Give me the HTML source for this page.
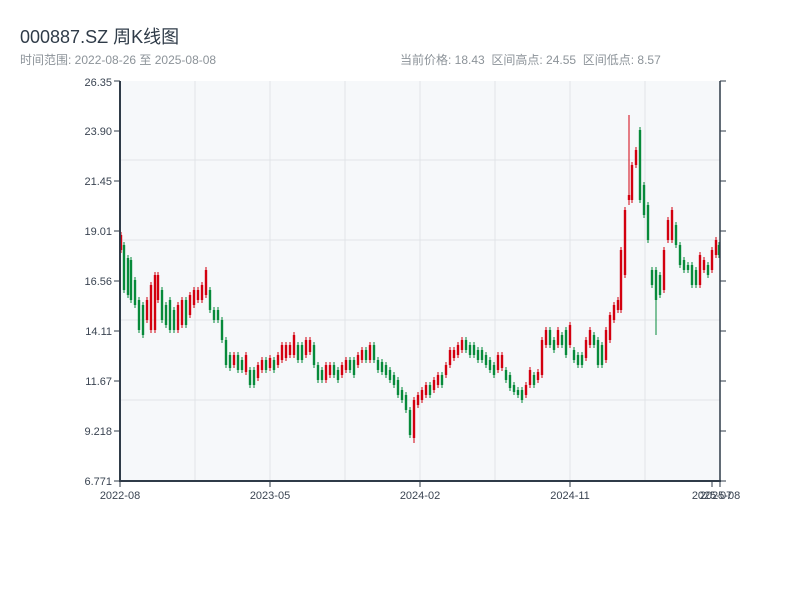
<!DOCTYPE html>
<html><head><meta charset="utf-8"><style>
body{margin:0;width:800px;height:600px;background:#fff;font-family:"Liberation Sans","Noto Sans CJK SC",sans-serif;overflow:hidden;position:relative}
.t{position:absolute;left:20px;top:23px;font-size:18px;color:#2f3b48}
.s{position:absolute;top:51px;font-size:12px;color:#8c9399}
svg{position:absolute;left:0;top:0}
svg text{font-family:"Liberation Sans",sans-serif;font-size:11px;fill:#3a4452}
</style></head><body>
<div class="t">000887.SZ 周K线图</div>
<div class="s" style="left:20px">时间范围: 2022-08-26 至 2025-08-08</div>
<div class="s" style="left:400px">当前价格: 18.43 &nbsp;区间高点: 24.55 &nbsp;区间低点: 8.57</div>
<svg id="c" width="800" height="600">
<rect x="120" y="81" width="600" height="400" fill="#f6f8fa"/>
<g stroke="#e1e4e8" stroke-width="1">
<line x1="120" y1="160" x2="720" y2="160"/><line x1="120" y1="240" x2="720" y2="240"/>
<line x1="120" y1="320" x2="720" y2="320"/><line x1="120" y1="400" x2="720" y2="400"/>
<line x1="195" y1="81" x2="195" y2="481"/><line x1="270" y1="81" x2="270" y2="481"/>
<line x1="345" y1="81" x2="345" y2="481"/><line x1="420" y1="81" x2="420" y2="481"/>
<line x1="495" y1="81" x2="495" y2="481"/><line x1="570" y1="81" x2="570" y2="481"/>
<line x1="645" y1="81" x2="645" y2="481"/>
</g>
<g id="k"></g>
<g stroke="#2f3b48" stroke-width="2">
<line x1="120" y1="81" x2="120" y2="482"/><line x1="119" y1="481" x2="721" y2="481"/>
<line x1="720" y1="81" x2="720" y2="482" stroke-width="1.5"/>
</g>
<g stroke="#2f3b48" stroke-width="1" id="ticks"></g>
<g text-anchor="end">
<text x="112" y="86">26.35</text><text x="112" y="135">23.90</text><text x="112" y="185">21.45</text>
<text x="112" y="235">19.01</text><text x="112" y="285">16.56</text><text x="112" y="335">14.11</text>
<text x="112" y="385">11.67</text><text x="112" y="435">9.218</text><text x="112" y="485">6.771</text>
</g>
<g text-anchor="middle">
<text x="120" y="499">2022-08</text><text x="270" y="499">2023-05</text><text x="420" y="499">2024-02</text>
<text x="570" y="499">2024-11</text><text x="712" y="499">2025-07</text><text x="720" y="499">2025-08</text>
</g>
</svg>
<script>
var d=[[121,235,250],[124,245,290],[128,258,295],[131,260,300],[135,280,305],[139,300,330],[143,305,335],[147,300,320],[151,285,330],[155,275,330],[158,275,300],[162,290,320],[166,305,325],[170,300,330],[174,310,330],[178,305,330],[182,300,325],[186,300,325],[190,295,315],[194,290,305],[198,290,300],[202,285,300],[206,270,295],[210,290,310],[214,310,320],[218,310,320],[222,320,340],[226,340,365],[230,355,368],[234,355,365],[238,355,370],[242,360,370],[246,355,372],[250,370,385],[254,370,385],[258,365,378],[262,360,370],[266,360,370],[270,358,368],[274,360,370],[278,355,365],[282,345,360],[286,345,358],[290,345,355],[294,335,355],[298,345,360],[302,345,360],[306,340,355],[310,340,352],[314,345,365],[318,365,380],[322,370,380],[326,365,380],[330,365,375],[334,365,375],[338,370,380],[342,365,375],[346,360,370],[350,360,370],[354,360,375],[358,355,365],[362,350,360],[366,350,360],[370,345,360],[374,345,360],[378,360,370],[382,362,372],[386,365,375],[390,370,380],[394,375,385],[398,380,395],[402,390,400],[406,395,410],[410,410,435],[414,400,438],[418,395,405],[422,390,400],[426,385,395],[430,385,395],[434,380,390],[438,375,385],[442,375,385],[446,365,375],[450,350,365],[454,350,358],[458,345,355],[462,340,350],[466,340,350],[470,345,355],[474,345,355],[478,350,360],[482,350,360],[486,355,365],[490,360,370],[494,365,375],[498,355,370],[502,355,368],[506,370,380],[510,375,388],[514,385,392],[518,390,395],[522,390,400],[526,385,395],[530,370,385],[534,375,385],[538,372,380],[542,340,375],[546,330,345],[550,330,345],[554,340,350],[558,330,345],[562,335,345],[566,330,355],[570,325,345],[574,350,360],[578,355,365],[582,355,365],[586,340,358],[590,330,345],[594,335,345],[598,340,365],[602,345,365],[606,330,360],[610,315,340],[614,305,320],[618,300,310],[621,250,310],[625,210,275],[629,195,200],[632,165,200],[636,150,165],[640,130,200],[644,185,215],[648,205,240],[652,270,285],[656,270,300],[660,275,295],[664,250,290],[668,220,240],[672,210,240],[676,225,245],[680,245,265],[684,260,270],[688,265,270],[692,265,285],[696,270,285],[700,255,285],[704,260,270],[708,265,275],[712,250,270],[716,240,255],[719,245,255]];
var s='',pm=1e9;
d.forEach(function(c){var m=(c[1]+c[2])/2,up=m<pm,col=up?'#d3000f':'#078a3a';pm=m;
var h=c[2]-c[1];if(h<2)h=2;
s+='<line x1="'+c[0]+'" x2="'+c[0]+'" y1="'+(c[1]-3)+'" y2="'+(c[2]+3)+'" stroke="'+col+'" stroke-width="1"/>';
s+='<rect x="'+(c[0]-1.2)+'" y="'+c[1]+'" width="2.4" height="'+h+'" fill="'+col+'"/>';});
s+='<line x1="656" x2="656" y1="295" y2="335" stroke="#078a3a"/><line x1="629" x2="629" y1="115" y2="205" stroke="#d3000f"/><line x1="414" x2="414" y1="430" y2="443" stroke="#d3000f"/>';
document.getElementById('k').innerHTML=s;
var t='';[81,131,181,231,281,331,381,431,481].forEach(function(y){t+='<line x1="114" x2="120" y1="'+y+'" y2="'+y+'"/><line x1="720" x2="726" y1="'+y+'" y2="'+y+'"/>';});
[120,270,420,570,712,720].forEach(function(x){t+='<line x1="'+x+'" x2="'+x+'" y1="481" y2="487"/>';});
document.getElementById('ticks').innerHTML=t;
</script>
</body></html>
